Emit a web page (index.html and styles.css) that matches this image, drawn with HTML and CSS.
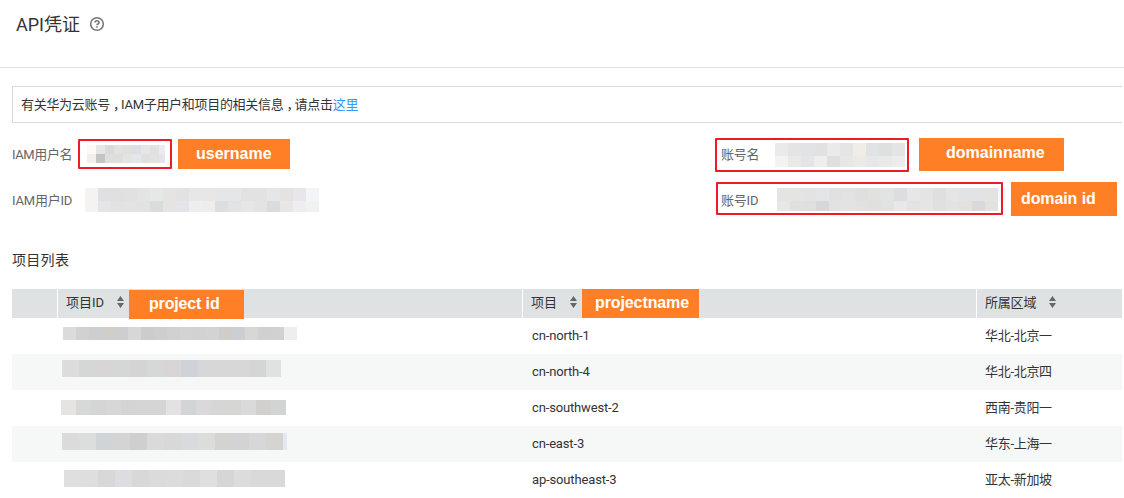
FILE: index.html
```html
<!DOCTYPE html>
<html lang="zh-CN">
<head>
<meta charset="utf-8">
<title>API凭证</title>
<link rel="stylesheet" href="styles.css">
</head>
<body>
<header class="page-head">
  <h1 class="title">API凭证</h1>
  <svg class="help" viewBox="0 0 16 16" width="16" height="16"><circle cx="8" cy="8" r="6.3" fill="none" stroke="#777" stroke-width="1.6"/><path d="M6 6.6C6 5.3 6.8 4.7 8 4.7s2.1.7 2.1 1.7c0 1.3-2.1 1.4-2.1 2.9" fill="none" stroke="#777" stroke-width="1.6"/><path d="M7.2 10.2h1.6v1.6H7.2z" fill="#777"/></svg>
</header>
<main class="content">
  <div class="notice"><span class="notice-text">有关华为云账号<span class="comma">，</span>IAM子用户和项目的相关信息<span class="comma">，</span>请点击<a class="link">这里</a></span></div>
  <section class="info">
    <div class="label tight">IAM用户名</div><div class="label">账号名</div>
    <div class="label">IAM用户ID</div><div class="label">账号ID</div>
  </section>
  <h2 class="subtitle">项目列表</h2>
  <div class="table">
    <div class="row head">
      <div></div>
      <div class="cell">项目ID<svg class="sort" viewBox="0 0 7 12" width="7" height="12"><path d="M0 5L3.5 0 7 5zM0 7h7L3.5 12z"/></svg></div>
      <div class="cell">项目<svg class="sort" viewBox="0 0 7 12" width="7" height="12"><path d="M0 5L3.5 0 7 5zM0 7h7L3.5 12z"/></svg></div>
      <div class="cell">所属区域<svg class="sort" viewBox="0 0 7 12" width="7" height="12"><path d="M0 5L3.5 0 7 5zM0 7h7L3.5 12z"/></svg></div>
    </div>
    <div class="row"><div></div><div></div><div class="cell name">cn-north-1</div><div class="cell region">华北-北京一</div></div>
    <div class="row alt"><div></div><div></div><div class="cell name">cn-north-4</div><div class="cell region">华北-北京四</div></div>
    <div class="row"><div></div><div></div><div class="cell name">cn-southwest-2</div><div class="cell region">西南-贵阳一</div></div>
    <div class="row alt"><div></div><div></div><div class="cell name">cn-east-3</div><div class="cell region">华东-上海一</div></div>
    <div class="row"><div></div><div></div><div class="cell name">ap-southeast-3</div><div class="cell region">亚太-新加坡</div></div>
  </div>
</main>

<div class="mosaic m-user" data-cell="9" data-rows="fbfaf7 e6e6e6 dadada e2e2e2 e1e0de dddfe3 e5e6e6 e1e1e1 ebebed|f1eeeb c4c4c4 dedede e0dddd e3e5e3 e5e6eb e0e0e0 e3e2e0 e4e5ea"></div>
<div class="mosaic m-userid" data-cell="13" data-rows="f4f3f2 e0e0e2 e0e0e2 e1e1e1 e3e4e3 e6e7e7 e4e4e3 e2e2e2 e7e7e7 e7e7e7 e4e6e8 e6e6e6 e2e2e1 e2e2e3 e5e7e6 e4e3e2 e8e6ea f3f4f7|f4f3f2 e5e5e8 e2e2e3 e3e3e3 e1e3e2 dadbdb e5e4e2 e5e5e9 eeeeed eeedec dcdee0 e2e3e4 e6e6e6 e3e3e3 dadbdc e9e7e5 eeeef0 f0f2f1"></div>
<div class="mosaic m-domain" data-cell="13" data-rows="ebe9e9 e5e4e4 e2e3e6 e1e1e1 eaeaea e5e6e4 f0ece8 e0e3e3 dee0df e3e4e3|f3f3f3 e9e9e8 e3e5e7 eeeeef dfdfe0 e6e7e7 eaeae8 e5e7ea e9e9ea ececec"></div>
<div class="mosaic m-domainid" data-cell="13" data-rows="e4e4e3 e4e4e3 e2e4e3 e4e5e6 e1e1e1 e2e2e2 dfe0dd e1e1df e2e3e3 dddddf e6e7e6 e3e5e4 dfdfe0 e4e6e6 e2e3e5 e2e3e3 e3e4e2 f6f6fb|e7e7e5 e0e0e0 dfdfe0 d6d7d9 e2e2e4 e2e3e2 e0e1e1 e0e0df e2e2e2 e7e8ec e2e4e3 e5e5e6 e0e0e1 e2e3e2 e2e1df d8d9da e2e2e0 ffffff"></div>
<div class="mosaic m-r1" data-cell="13" data-rows="dcdbda d0d2d1 cdced0 d1cdc8 ceced0 d7d7d7 cccccc d0cecc d1d1d0 d3d3d1 d2d2d2 d2d3d2 cfccca cbced2 d8d7d5 d0d0d0 d1d1d4 eeeeee"></div>
<div class="mosaic m-r2" data-cell="17" data-rows="dcdcdd d4d7d7 d8d6d4 d5d6d8 d3d4d3 d6d8d8 d8d5d4 cfd2d7 d7d7d7 d6d7d6 d7d7d4 d4d5d4 e0e1e3"></div>
<div class="mosaic m-r3" data-cell="15" data-rows="e5e4e3 d7d9d8 d4d6d5 d7d7d5 d5d4d4 d4d6d5 d5d5d5 e3e1e3 d3d4d7 dbd8db d7d6d7 d6d6d4 dadadb d1d0cf d2d4d4"></div>
<div class="mosaic m-r4" data-cell="17" data-rows="dcdbdc dcdedd d0d4d6 d5d4d4 cfcfcf dadadb d8d8d8 d9dadd daddda d3d3d2 d2d3d5 d7d7d8 d5d4d1 e5e9ef"></div>
<div class="mosaic m-r5" data-cell="17" data-rows="dfdfdf dededd d9d8d6 dbdde0 d6d9d7 dbdbdb dcdcdc dcd9da dfdfdd d6d6d6 dcdcdd d9d9d9 d9d9d9"></div>

<div class="frame f-user"></div>
<div class="frame f-domain"></div>
<div class="frame f-domainid"></div>

<div class="tag t-user"><span>username</span></div>
<div class="tag t-domain"><span>domainname</span></div>
<div class="tag t-domainid"><span>domain id</span></div>
<div class="tag t-projectid"><span>project id</span></div>
<div class="tag t-projectname"><span>projectname</span></div>
<script src="mosaic.js"></script>
</body>
</html>
```
FILE: styles.css
```css
* { box-sizing: border-box; }
body { margin: 0; height: 498px; overflow: hidden; position: relative; background: #fff; color: #333; font-family: Roboto, "Noto Sans CJK SC", sans-serif; font-size: 13px; }
.page-head { height: 68px; border-bottom: 1px solid #dfe1e1; padding: 13px 0 0 16px; display: flex; align-items: flex-start; gap: 9px; }
.title { margin: 0; font-size: 18px; line-height: 24px; font-weight: 400; }
.help { margin-top: 3px; }
.content { padding: 18px 2px 0 12px; }
.notice { height: 37px; border: 1px solid #d9d9d9; border-right: 0; padding: 0 0 2px 8px; display: flex; align-items: center; }
.notice-text { letter-spacing: -0.3px; }
.comma { font-feature-settings: "halt"; padding: 0 2px 0 3px; }
.link { color: #3399ff; }
.info { display: grid; grid-template-columns: 709px 1fr; grid-template-rows: 46px 46px; margin-top: 8px; color: #666; }
.label { display: flex; align-items: center; letter-spacing: -0.2px; padding-bottom: 2px; }
.tight { letter-spacing: -0.4px; }
.subtitle { margin: 22px 0 0; height: 30px; line-height: 30px; font-size: 14px; font-weight: 400; letter-spacing: 0.3px; }
.table { margin-top: 14px; }
.row { display: grid; grid-template-columns: 45px 464px 453px 145px; column-gap: 1px; height: 36px; }
.cell { display: flex; align-items: center; padding: 0 0 2px 8px; }
.row > .region { letter-spacing: -0.3px; padding-bottom: 4px; }
.row > .name { padding-left: 9px; letter-spacing: -0.15px; }
.alt { background: #f6f8f8; }
.head { height: 29px; }
.head > div { background: #dfe2e3; }
.head > .cell { padding-bottom: 4px; }
.head > .cell:last-child { letter-spacing: -0.2px; }
.sort { fill: #666; margin: 1px 0 0 13px; }

.mosaic { position: absolute; display: flex; flex-direction: column; overflow: hidden; }
.mosaic-row { display: flex; flex: none; }
.mosaic-cell { flex: none; }
.m-user { left: 87px; top: 145px; width: 78px; height: 18px; }
.m-userid { left: 85px; top: 188px; width: 234px; height: 24px; }
.m-domain { left: 775px; top: 143px; width: 130px; height: 24px; }
.m-domainid { left: 777px; top: 188px; width: 229px; height: 23px; }
.m-r1 { left: 63px; top: 327px; width: 234px; height: 13px; }
.m-r2 { left: 62px; top: 360px; width: 219px; height: 17px; }
.m-r3 { left: 61px; top: 400px; width: 225px; height: 15px; }
.m-r4 { left: 62px; top: 433px; width: 225px; height: 17px; }
.m-r5 { left: 64px; top: 470px; width: 221px; height: 17px; }

.frame { position: absolute; border: 2px solid #ed1c24; border-radius: 1px; }
.f-user { left: 78px; top: 139px; width: 94px; height: 30px; }
.f-domain { left: 715px; top: 138px; width: 194px; height: 34px; }
.f-domainid { left: 716px; top: 182px; width: 287px; height: 33px; }

.tag { position: absolute; display: flex; align-items: center; background: #ff7f27; color: #fff; font: bold 16px/20px "Liberation Sans", Arial, sans-serif; white-space: nowrap; }
.t-user { left: 178px; top: 139px; width: 112px; height: 30px; padding-left: 18px; }
.t-domain { left: 919px; top: 138px; width: 145px; height: 33px; padding: 0 0 4px 27px; }
.t-domainid { left: 1011px; top: 182px; width: 106px; height: 34px; padding-left: 10px; letter-spacing: -0.1px; }
.t-projectid { left: 129px; top: 290px; width: 115px; height: 29px; padding: 0 0 2px 20px; letter-spacing: -0.15px; }
.t-projectname { left: 582px; top: 289px; width: 117px; height: 29px; padding: 0 0 2px 13px; letter-spacing: -0.1px; }
```
FILE: mosaic.js
```js
// Fills each redaction block with rows of flat square cells.
document.querySelectorAll(".mosaic").forEach(function (el) {
  var size = el.dataset.cell + "px";
  el.dataset.rows.split("|").forEach(function (line) {
    var row = document.createElement("div");
    row.className = "mosaic-row";
    line.split(" ").forEach(function (color) {
      var cell = document.createElement("div");
      cell.className = "mosaic-cell";
      cell.style.width = cell.style.height = size;
      cell.style.background = "#" + color;
      row.appendChild(cell);
    });
    el.appendChild(row);
  });
});
```
